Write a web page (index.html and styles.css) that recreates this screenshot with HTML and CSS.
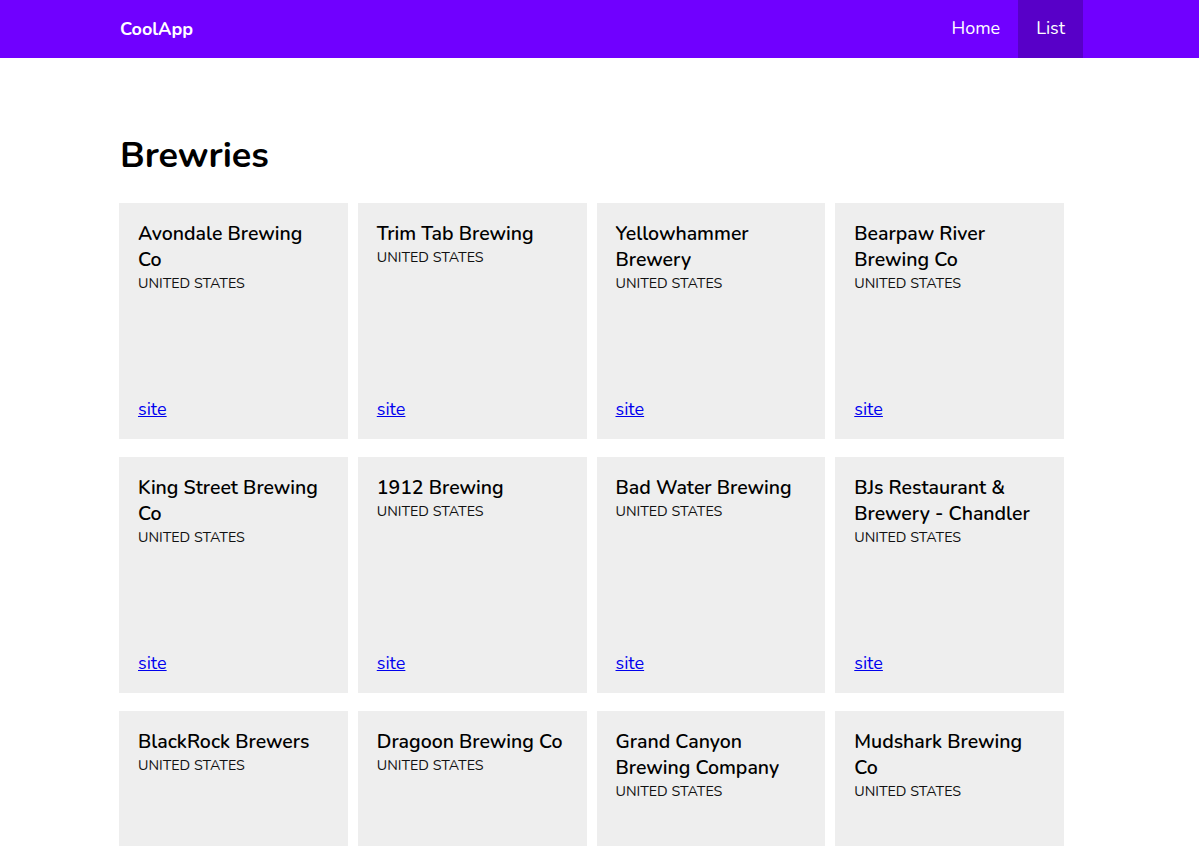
FILE: index.html
```html
<!DOCTYPE html>
<html lang="en">
<head>
<meta charset="utf-8">
<title>CoolApp</title>
<link rel="stylesheet" href="styles.css">
</head>
<body>
<header class="nav">
  <div class="container nav-inner">
    <a class="brand" href="#">CoolApp</a>
    <nav class="links">
      <a class="link" href="#">Home</a>
      <a class="link active" href="#">List</a>
    </nav>
  </div>
</header>
<main class="container">
  <h1 class="title">Brewries</h1>
  <div class="grid">
    <div class="card"><div><h3 class="name">Avondale Brewing Co</h3><p class="country">UNITED STATES</p></div><a class="site" href="#">site</a></div>
    <div class="card"><div><h3 class="name">Trim Tab Brewing</h3><p class="country">UNITED STATES</p></div><a class="site" href="#">site</a></div>
    <div class="card"><div><h3 class="name">Yellowhammer Brewery</h3><p class="country">UNITED STATES</p></div><a class="site" href="#">site</a></div>
    <div class="card"><div><h3 class="name">Bearpaw River Brewing Co</h3><p class="country">UNITED STATES</p></div><a class="site" href="#">site</a></div>
    <div class="card"><div><h3 class="name">King Street Brewing Co</h3><p class="country">UNITED STATES</p></div><a class="site" href="#">site</a></div>
    <div class="card"><div><h3 class="name">1912 Brewing</h3><p class="country">UNITED STATES</p></div><a class="site" href="#">site</a></div>
    <div class="card"><div><h3 class="name">Bad Water Brewing</h3><p class="country">UNITED STATES</p></div><a class="site" href="#">site</a></div>
    <div class="card"><div><h3 class="name">BJs Restaurant &amp; Brewery - Chandler</h3><p class="country">UNITED STATES</p></div><a class="site" href="#">site</a></div>
    <div class="card"><div><h3 class="name">BlackRock Brewers</h3><p class="country">UNITED STATES</p></div><a class="site" href="#">site</a></div>
    <div class="card"><div><h3 class="name">Dragoon Brewing Co</h3><p class="country">UNITED STATES</p></div><a class="site" href="#">site</a></div>
    <div class="card"><div><h3 class="name">Grand Canyon Brewing Company</h3><p class="country">UNITED STATES</p></div><a class="site" href="#">site</a></div>
    <div class="card"><div><h3 class="name">Mudshark Brewing Co</h3><p class="country">UNITED STATES</p></div><a class="site" href="#">site</a></div>
  </div>
</main>
</body>
</html>
```
FILE: styles.css
```css
* { box-sizing: border-box; }
html, body { margin: 0; padding: 0; }
body {
  font-family: "Nunito", "Noto Sans", "Open Sans", sans-serif;
  color: #000;
  background: #fff;
  padding-left: 4px;
}
.container {
  width: 963px;
  margin: 0 auto;
}
.nav {
  background: #7000ff;
  height: 58px;
  margin-left: -4px;
  padding-left: 4px;
}
.nav-inner {
  display: flex;
  align-items: stretch;
  justify-content: space-between;
  height: 58px;
}
.brand {
  color: #fff;
  text-decoration: none;
  font-weight: 700;
  font-size: 18px;
  display: flex;
  align-items: center;
}
.links { display: flex; }
.link {
  color: #fff;
  text-decoration: none;
  font-size: 18px;
  display: flex;
  align-items: center;
  padding: 0 18px 2px;
}
.link.active { background: #5800c8; }
.title {
  font-size: 36px;
  font-weight: 700;
  margin: 76px 0 26px;
  line-height: 1.2;
}
.grid {
  width: 945px;
  margin-left: -1px;
  display: grid;
  grid-template-columns: repeat(4, 1fr);
  column-gap: 10px;
  row-gap: 18px;
  padding-bottom: 20px;
}
.card {
  background: #eeeeee;
  height: 236px;
  padding: 18px 19px 18px 19px;
  display: flex;
  flex-direction: column;
  justify-content: space-between;
}
.name {
  margin: 0;
  font-size: 19.5px;
  font-weight: 600;
  line-height: 26px;
}
.country {
  margin: 0;
  font-size: 14.3px;
  line-height: 22px;
  color: #111;
}
.site {
  color: #0000ee;
  font-size: 18px;
  line-height: 24px;
}
```
